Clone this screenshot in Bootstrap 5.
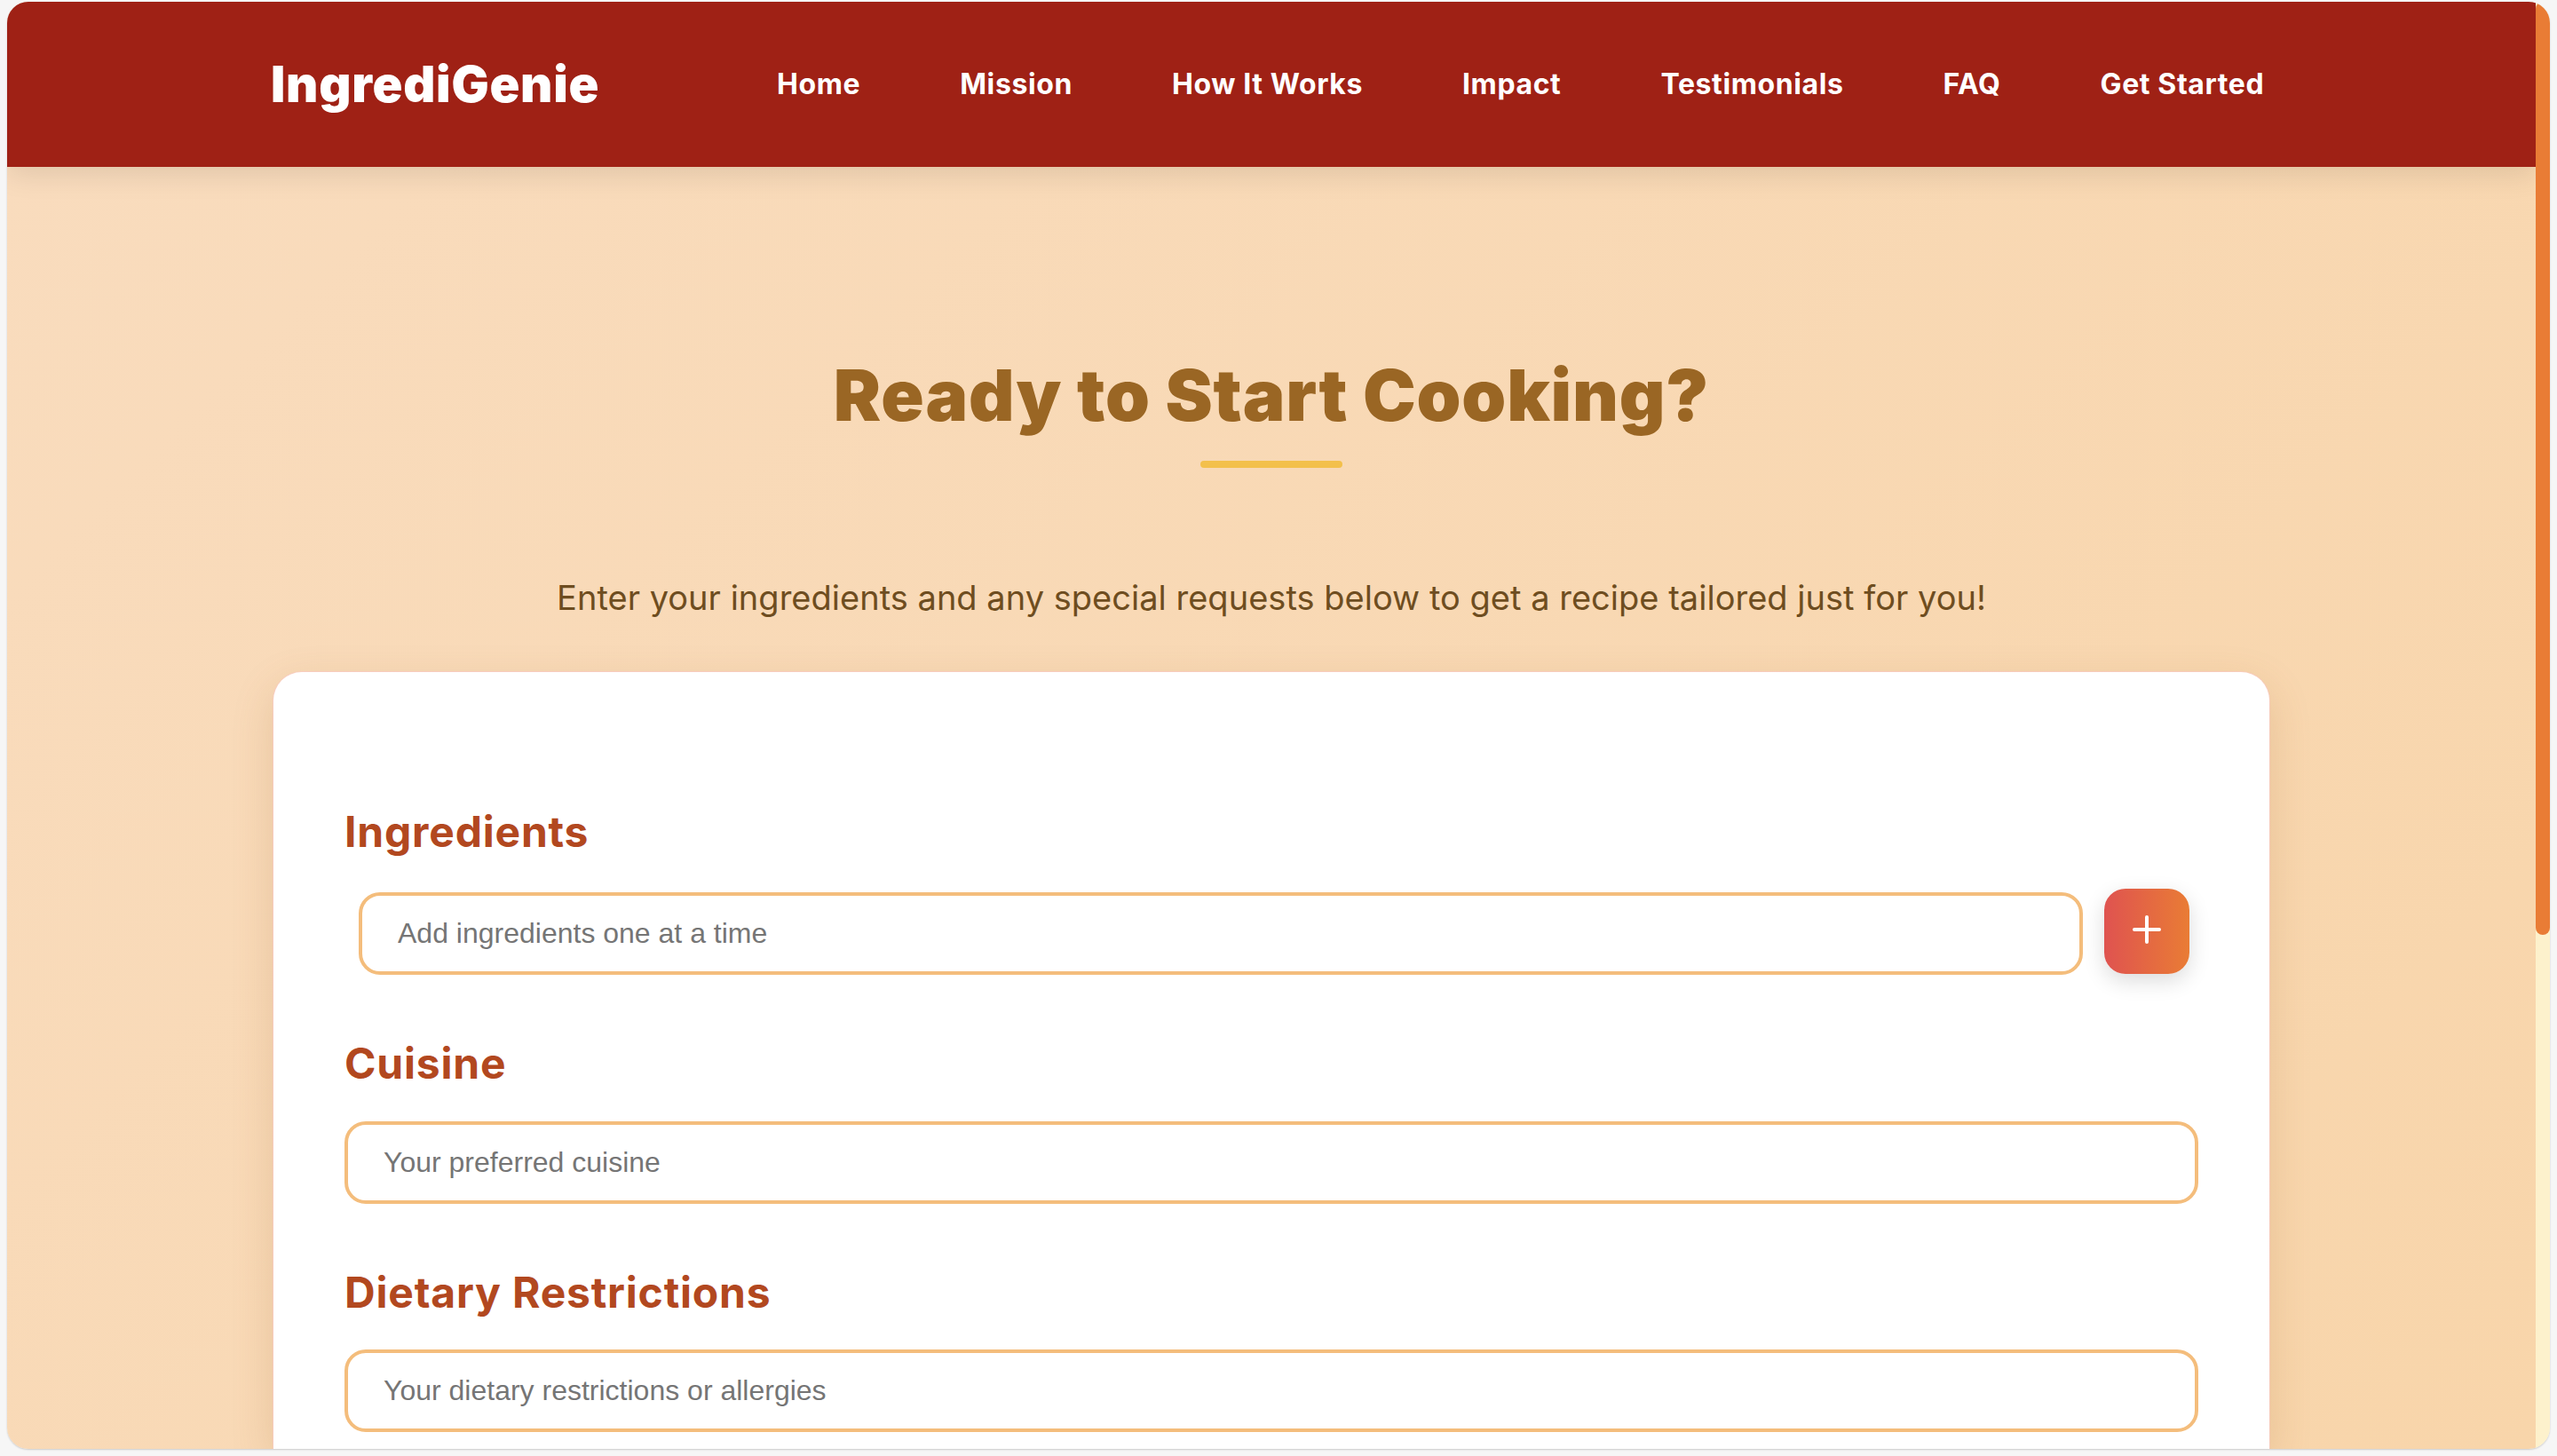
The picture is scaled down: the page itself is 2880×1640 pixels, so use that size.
<!DOCTYPE html>
<html lang="en">
<head>
    <meta charset="UTF-8">
    <title>IngrediGenie</title>
    <link href="https://cdn.jsdelivr.net/npm/bootstrap@5.3.1/dist/css/bootstrap.min.css" rel="stylesheet">
    <style>
        html, body {
            height: 100%;
            overflow: hidden;
        }

        body {
            background-color: #f6f6f6;
            padding: 2px 8px 8px;
            font-family: 'Inter', 'Liberation Sans', sans-serif;
        }

        .app-frame {
            height: 1630px;
            border-radius: 24px;
            overflow: hidden;
            box-shadow: 0 1px 2px rgba(0, 0, 0, 0.18);
        }

        /* Scrollbar drawn as its own column */
        .fake-track {
            width: 16px;
            background-color: #fdf1cc;
        }

        .fake-thumb {
            height: 1051px;
            background-color: #e97c35;
            border-radius: 8px;
        }

        .page-main {
            min-width: 0;
            background: linear-gradient(135deg, #f9dcbe, #f8d5aa);
            overflow: hidden;
        }

        /* Header */
        .top-bar {
            height: 186px;
            flex: none;
            padding-left: 297px;
            background-color: #9f2115;
            box-shadow: 0 8px 30px rgba(0, 0, 0, 0.1);
            position: relative;
        }

        .brand-name {
            width: 370px;
            margin-right: 200px;
            color: #fff;
            font-size: 56px;
            font-weight: 900;
            letter-spacing: 0.75px;
            line-height: 1;
        }

        .top-nav {
            gap: 112px;
        }

        .top-link {
            color: #fff;
            font-size: 32px;
            font-weight: 700;
            letter-spacing: 0.6px;
            text-decoration: none;
        }

        /* Intro */
        .intro-title {
            margin: 209px 0 0;
            color: #9a6624;
            font-size: 80px;
            font-weight: 900;
            line-height: 1.2;
            letter-spacing: 0.8px;
        }

        .title-rule {
            width: 160px;
            height: 8px;
            margin: 26px auto 0;
            border-radius: 4px;
            background-color: #f3c04b;
        }

        .intro-text {
            margin: 124px 0 0;
            color: #6e4d20;
            font-size: 38px;
            font-weight: 400;
            line-height: 1.2;
            letter-spacing: 0.02px;
        }

        /* Form card */
        .form-panel {
            width: 2248px;
            margin: 60px 0 0 300px;
            padding: 151px 80px 0;
            flex: 1;
            background-color: #fff;
            border-radius: 32px 32px 0 0;
            box-shadow: 0 0 0 1px rgba(250, 200, 200, 0.6), 0 16px 48px rgba(150, 90, 30, 0.18);
        }

        .field-title {
            margin: 0 0 36px;
            color: #b2481f;
            font-size: 48px;
            font-weight: 700;
            line-height: 1.2;
            letter-spacing: 0.8px;
        }

        .field-title.first-field {
            margin-bottom: 40px;
        }

        .field-title.next-field {
            margin-top: 71px;
        }

        .field-input.form-control {
            height: 93px;
            padding: 0 40px;
            border: 4px solid #f4bd7c;
            border-radius: 24px;
            font-family: 'Liberation Sans', Arial, sans-serif;
            font-size: 32px;
        }

        .field-input.form-control::placeholder {
            color: #757575;
            opacity: 1;
        }

        .ingredient-row {
            padding: 0 10px 0 16px;
        }

        .add-btn {
            width: 96px;
            height: 96px;
            flex: none;
            padding: 0;
            margin-top: -4px;
            border: 0;
            border-radius: 24px;
            background: linear-gradient(90deg, #df5350, #e97c35);
            box-shadow: 0 8px 24px rgba(0, 0, 0, 0.14);
        }
    </style>
</head>
<body>
    <div class="app-frame d-flex">
        <div class="page-main flex-grow-1 d-flex flex-column">
            <header class="top-bar d-flex align-items-center">
                <div class="brand-name">IngrediGenie</div>
                <nav class="top-nav d-flex">
                    <a class="top-link" href="#">Home</a>
                    <a class="top-link" href="#">Mission</a>
                    <a class="top-link" href="#">How It Works</a>
                    <a class="top-link" href="#">Impact</a>
                    <a class="top-link" href="#">Testimonials</a>
                    <a class="top-link" href="#">FAQ</a>
                    <a class="top-link" href="#">Get Started</a>
                </nav>
            </header>

            <section class="text-center">
                <h1 class="intro-title">Ready to Start Cooking?</h1>
                <div class="title-rule"></div>
                <p class="intro-text">Enter your ingredients and any special requests below to get a recipe tailored just for you!</p>
            </section>

            <div class="form-panel">
                <h2 class="field-title first-field">Ingredients</h2>
                <div class="ingredient-row d-flex align-items-start gap-4">
                    <input type="text" class="form-control field-input" placeholder="Add ingredients one at a time">
                    <button type="button" class="add-btn d-flex align-items-center justify-content-center">
                        <svg class="mb-1" width="32" height="32" viewBox="0 0 32 32"><path d="M16 2v28M2 16h28" stroke="#fff" stroke-width="4" stroke-linecap="round"/></svg>
                    </button>
                </div>
                <h2 class="field-title next-field">Cuisine</h2>
                <input type="text" class="form-control field-input" placeholder="Your preferred cuisine">
                <h2 class="field-title next-field">Dietary Restrictions</h2>
                <input type="text" class="form-control field-input" placeholder="Your dietary restrictions or allergies">
            </div>
        </div>
        <div class="fake-track flex-shrink-0">
            <div class="fake-thumb"></div>
        </div>
    </div>
    <script src="https://cdn.jsdelivr.net/npm/bootstrap@5.3.1/dist/js/bootstrap.bundle.min.js"></script>
</body>
</html>
